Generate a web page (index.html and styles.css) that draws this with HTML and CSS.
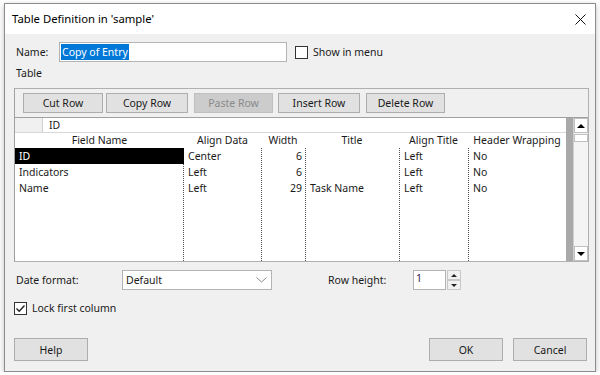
FILE: index.html
```html
<!DOCTYPE html>
<html lang="en">
<head>
    <meta charset="UTF-8">
    <title>Table Definition in 'sample'</title>
    <link rel="stylesheet" href="styles.css">
</head>
<body>
    <div class="dialog">
        <div class="titlebar">
            <span class="title">Table Definition in 'sample'</span>
            <svg class="close" width="11" height="11" viewBox="0 0 11 11">
                <path d="M0.5 0.5 L10.5 10.5 M10.5 0.5 L0.5 10.5" stroke="#111" stroke-width="1" fill="none"/>
            </svg>
        </div>

        <div class="content">
            <div class="name-row">
                <label class="name-label">Name:</label>
                <div class="text-box"><span class="selected">Copy of Entry</span></div>
                <span class="checkbox"></span>
                <span class="check-label">Show in menu</span>
            </div>

            <div class="section-label">Table</div>

            <div class="group">
                <div class="toolbar">
                    <button class="btn cut">Cut Row</button>
                    <button class="btn copy">Copy Row</button>
                    <button class="btn paste" disabled>Paste Row</button>
                    <button class="btn insert">Insert Row</button>
                    <button class="btn delete">Delete Row</button>
                </div>

                <div class="grid-wrap">
                    <div class="grid">
                        <div class="edit-row">
                            <div class="edit-stub"></div>
                            <div class="edit-value">ID</div>
                        </div>
                        <div class="grid-head">
                            <div class="c1">Field Name</div>
                            <div class="c2">Align Data</div>
                            <div class="c3">Width</div>
                            <div class="c4">Title</div>
                            <div class="c5">Align Title</div>
                            <div class="c6">Header Wrapping</div>
                        </div>
                        <div class="grid-body">
                            <div class="col c1">
                                <div class="cell active">ID</div>
                                <div class="cell">Indicators</div>
                                <div class="cell">Name</div>
                            </div>
                            <div class="col c2">
                                <div class="cell">Center</div>
                                <div class="cell">Left</div>
                                <div class="cell">Left</div>
                            </div>
                            <div class="col c3 num">
                                <div class="cell">6</div>
                                <div class="cell">6</div>
                                <div class="cell">29</div>
                            </div>
                            <div class="col c4">
                                <div class="cell"></div>
                                <div class="cell"></div>
                                <div class="cell">Task Name</div>
                            </div>
                            <div class="col c5">
                                <div class="cell">Left</div>
                                <div class="cell">Left</div>
                                <div class="cell">Left</div>
                            </div>
                            <div class="col c6">
                                <div class="cell">No</div>
                                <div class="cell">No</div>
                                <div class="cell">No</div>
                            </div>
                        </div>
                    </div>
                    <div class="grid-gap"></div>
                    <div class="scrollbar">
                        <div class="sb-btn"><span class="tri up"></span></div>
                        <div class="sb-thumb"></div>
                        <div class="sb-track"></div>
                        <div class="sb-btn"><span class="tri down"></span></div>
                    </div>
                </div>
            </div>

            <div class="options-row">
                <label class="date-label">Date format:</label>
                <div class="select">
                    <span>Default</span>
                    <svg width="11" height="6" viewBox="0 0 11 6">
                        <path d="M0.5 0.5 L5.5 5 L10.5 0.5" stroke="#8a8a8a" fill="none"/>
                    </svg>
                </div>
                <label class="row-label">Row height:</label>
                <div class="spin-box">1</div>
                <div class="spinner">
                    <div class="spin-btn"><span class="tri small up"></span></div>
                    <div class="spin-btn"><span class="tri small down"></span></div>
                </div>
            </div>

            <div class="lock-row">
                <span class="checkbox checked">
                    <svg width="11" height="11" viewBox="0 0 11 11">
                        <path d="M1.5 5.5 L4.2 8.2 L9.5 2.5" stroke="#222" stroke-width="1.4" fill="none"/>
                    </svg>
                </span>
                <span class="check-label">Lock first column</span>
            </div>

            <div class="footer">
                <button class="btn big">Help</button>
                <div class="footer-right">
                    <button class="btn big">OK</button>
                    <button class="btn big">Cancel</button>
                </div>
            </div>
        </div>
    </div>
</body>
</html>
```

FILE: styles.css
```css
* {
    box-sizing: border-box;
}
body {
    margin: 0;
    background-color: #ffffff;
    font-family: "Noto Sans", "Open Sans", sans-serif;
    font-size: 10.5px;
    color: #1a1a1a;
}
.dialog {
    margin: 3px 0 0 4px;
    width: 592px;
    height: 369px;
    border: 1px solid #8c8c8c;
    background-color: #f0f0f0;
    box-shadow: 0 2px 6px rgba(0, 0, 0, 0.25);
    display: flex;
    flex-direction: column;
}
.titlebar {
    height: 30px;
    background-color: #ffffff;
    display: flex;
    align-items: center;
    justify-content: space-between;
    padding: 0 9px 0 7px;
    flex-shrink: 0;
}
.title {
    font-size: 11.3px;
    color: #000;
    margin-top: -1px;
}
.close {
    margin-top: 1px;
}
.content {
    padding: 8px 0 0 9px;
    flex: 1;
}
.name-row {
    display: flex;
    align-items: center;
    height: 20px;
}
.name-label {
    width: 45px;
    padding-left: 2px;
}
.text-box {
    width: 228px;
    height: 20px;
    background-color: #fff;
    border: 1px solid #b4b4b4;
    padding: 1px 0 0 1px;
    line-height: 16px;
}
.selected {
    background-color: #0078d7;
    color: #fff;
    display: inline-block;
    line-height: 16px;
    padding: 0 1px;
}
.checkbox {
    width: 13px;
    height: 13px;
    border: 1px solid #333;
    background-color: #fff;
    display: inline-block;
    margin-left: 8px;
    flex-shrink: 0;
}
.checkbox.checked {
    margin-left: 0;
    display: flex;
    align-items: center;
    justify-content: center;
}
.check-label {
    margin-left: 5px;
}
.section-label {
    margin-top: 4px;
    height: 14px;
    line-height: 14px;
    padding-left: 2px;
}
.group {
    margin-top: 8px;
    width: 575px;
    height: 174px;
    border: 1px solid #b0b0b0;
    border-left-color: #a0a0a0;
    display: flex;
    flex-direction: column;
}
.toolbar {
    display: flex;
    padding: 4px 0 0 8px;
    height: 28px;
}
.btn {
    font-family: "Noto Sans", "Open Sans", sans-serif;
    font-size: 10.5px;
    color: #1a1a1a;
    height: 20px;
    background-color: #e1e1e1;
    border: 1px solid #adadad;
    padding: 0;
    line-height: 17px;
}
.btn.cut { width: 80px; }
.btn.copy { width: 82px; margin-left: 3px; }
.btn.paste {
    width: 79px;
    margin-left: 6px;
    background-color: #cccccc;
    border-color: #bfbfbf;
    color: #8a8a8a;
}
.btn.insert { width: 82px; margin-left: 5px; }
.btn.delete { width: 79px; margin-left: 6px; }

.grid-wrap {
    flex: 1;
    display: flex;
    border-top: 1px solid #a0a0a0;
}
.grid {
    width: 551px;
    background-color: #fff;
    display: flex;
    flex-direction: column;
}
.edit-row {
    display: flex;
    height: 15px;
    border-bottom: 1px solid #d8d8d8;
}
.edit-stub {
    width: 28px;
    background-color: #f0f0f0;
    border-right: 1px solid #d0d0d0;
}
.edit-value {
    flex: 1;
    padding-left: 6px;
    line-height: 14px;
}
.grid-head {
    display: flex;
    height: 15px;
    line-height: 15px;
}
.grid-head div {
    text-align: center;
    white-space: nowrap;
}
.c1 { width: 169px; }
.c2 { width: 77px; }
.c3 { width: 44px; }
.c4 { width: 94px; }
.c5 { width: 69px; }
.c6 { width: 98px; }
.grid-body {
    flex: 1;
    display: flex;
}
.col {
    border-left: 1px dotted #555;
}
.col.c1 {
    border-left: none;
    border-right: 1px dotted #555;
    width: 169px;
}
.col.c2 {
    border-left: none;
}
.cell {
    height: 16px;
    line-height: 16px;
    padding-left: 4px;
    white-space: nowrap;
}
.cell.active {
    background-color: #000;
    color: #fff;
    margin-right: -1px;
}
.num .cell {
    text-align: right;
    padding-right: 3px;
}
.grid-gap {
    width: 7px;
    background-color: #a9a9a9;
}
.scrollbar {
    width: 16px;
    display: flex;
    flex-direction: column;
    background-color: #f4f4f4;
    border-left: 1px solid #d0d0d0;
}
.sb-btn {
    height: 15px;
    background-color: #fff;
    border: 1px solid #c0c0c0;
    display: flex;
    align-items: center;
    justify-content: center;
}
.sb-thumb {
    height: 8px;
    margin-top: 1px;
    background-color: #fff;
    border: 1px solid #c0c0c0;
}
.sb-track {
    flex: 1;
}
.tri {
    width: 0;
    height: 0;
    border-left: 4px solid transparent;
    border-right: 4px solid transparent;
}
.tri.up {
    border-bottom: 4px solid #000;
}
.tri.down {
    border-top: 4px solid #000;
}
.tri.small {
    border-left-width: 3px;
    border-right-width: 3px;
}
.tri.small.up {
    border-bottom: 3px solid #222;
}
.tri.small.down {
    border-top: 3px solid #222;
}

.options-row {
    margin-top: 8px;
    display: flex;
    align-items: center;
    height: 20px;
}
.date-label {
    width: 108px;
    padding-left: 2px;
}
.select {
    width: 150px;
    height: 20px;
    background-color: #fff;
    border: 1px solid #b4b4b4;
    display: flex;
    align-items: center;
    justify-content: space-between;
    padding: 0 4px 0 3px;
}
.row-label {
    margin-left: 56px;
    width: 85px;
}
.spin-box {
    width: 33px;
    height: 20px;
    background-color: #fff;
    border: 1px solid #b4b4b4;
    padding-left: 2px;
    line-height: 15px;
    color: #3a1a4a;
}
.spinner {
    margin-left: 1px;
    width: 14px;
    height: 20px;
    display: flex;
    flex-direction: column;
}
.spin-btn {
    flex: 1;
    background-color: #f0f0f0;
    border: 1px solid #c8c8c8;
    display: flex;
    align-items: center;
    justify-content: center;
}
.lock-row {
    margin-top: 11px;
    display: flex;
    align-items: center;
    height: 14px;
}
.footer {
    margin-top: 23px;
    width: 573px;
    display: flex;
    justify-content: space-between;
}
.footer-right {
    display: flex;
    gap: 10px;
}
.btn.big {
    width: 74px;
    height: 23px;
    line-height: 20px;
}
```
